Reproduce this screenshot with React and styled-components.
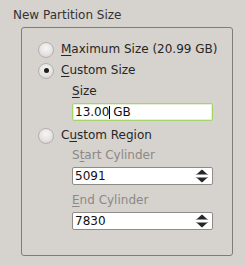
import React from "react";
import styled, { createGlobalStyle } from "styled-components";

const Global = createGlobalStyle`
  html, body { margin: 0; padding: 0; background: #d6d2ce; }
  body { font-family: "DejaVu Sans", sans-serif; font-size: 12px; color: #2e2e2e; }
`;

const Page = styled.div`
  width: 246px;
  height: 265px;
  box-sizing: border-box;
  padding: 8px 0 0 13px;
  display: flex;
  flex-direction: column;
`;

const Title = styled.div`
  line-height: 15px;
  height: 15px;
  color: #333;
`;

const Frame = styled.div`
  margin: 4px 0 0 8px;
  width: 212px;
  height: 229px;
  box-sizing: border-box;
  border: 1px solid #7e7b78;
  border-radius: 3px;
  padding: 11px 0 0 16px;
  display: flex;
  flex-direction: column;
`;

const RadioRow = styled.label`
  display: flex;
  align-items: center;
  height: 21px;
  gap: 7px;
  margin-top: ${(p) => p.$mt || 0}px;
  line-height: 15px;
  color: #262626;
`;

const RadioCircle = styled.span`
  width: 16px;
  height: 16px;
  box-sizing: border-box;
  border-radius: 50%;
  border: 1px solid #b3b0ad;
  background: radial-gradient(circle at 50% 35%, #f6f5f4 0%, #e6e4e2 55%, #cfccc9 100%);
  display: flex;
  align-items: center;
  justify-content: center;
  &::after {
    content: "";
    width: 5px;
    height: 5px;
    border-radius: 50%;
    background: ${(p) => (p.$checked ? "#1e1e1e" : "transparent")};
  }
`;

const Sub = styled.div`
  margin-left: 34px;
  display: flex;
  flex-direction: column;
  margin-top: ${(p) => p.$mt || 0}px;
`;

const FieldLabel = styled.div`
  line-height: 15px;
  height: 15px;
  color: ${(p) => (p.$dim ? "#8c8986" : "#262626")};
  margin-top: ${(p) => p.$mt || 0}px;
`;

const Entry = styled.div`
  margin-top: 4px;
  width: 141px;
  height: 18px;
  box-sizing: border-box;
  background: #fff;
  border: 1px solid ${(p) => (p.$focus ? "#a6d46c" : "#8e8b88")};
  border-radius: 2px;
  ${(p) => (p.$focus ? "box-shadow: inset 0 0 0 1px #e2f2cf;" : "")}
  display: flex;
  align-items: center;
  padding: 0 2px 0 2px;
  color: #111;
  line-height: 15px;
  white-space: pre;
`;

const EntryText = styled.span`
  flex: 1;
  display: flex;
  align-items: center;
`;

const Caret = styled.span`
  display: inline-block;
  width: 0;
  height: 13px;
  border-left: 1px solid #000;
  margin-right: -1px;
`;

const Mn = styled.span`
  text-decoration: underline;
  text-underline-offset: 2px;
  text-decoration-thickness: 1px;
`;

const Spin = () => (
  <svg width="14" height="14" viewBox="0 0 14 14" style={{ marginRight: 1 }}>
    <path d="M0.3 5.6 C3 5 5 2 7 0.6 C9 2 11 5 13.7 5.6 Z" fill="#262626" />
    <path d="M0.3 8.4 C3 9 5 12 7 13.4 C9 12 11 9 13.7 8.4 Z" fill="#262626" />
  </svg>
);

export default function App() {
  return (
    <>
      <Global />
      <Page>
        <Title>New Partition Size</Title>
        <Frame>
          <RadioRow>
            <RadioCircle />
            <span><Mn>M</Mn>aximum Size (20.99 GB)</span>
          </RadioRow>
          <RadioRow>
            <RadioCircle $checked />
            <span><Mn>C</Mn>ustom Size</span>
          </RadioRow>
          <Sub $mt={3}>
            <FieldLabel><Mn>S</Mn>ize</FieldLabel>
            <Entry $focus>
              <EntryText>13.00<Caret /> GB</EntryText>
            </Entry>
          </Sub>
          <RadioRow $mt={4}>
            <RadioCircle />
            <span>C<Mn>u</Mn>stom Region</span>
          </RadioRow>
          <Sub $mt={2}>
            <FieldLabel $dim>S<Mn>t</Mn>art Cylinder</FieldLabel>
            <Entry>
              <EntryText>5091</EntryText>
              <Spin />
            </Entry>
            <FieldLabel $dim $mt={8}><Mn>E</Mn>nd Cylinder</FieldLabel>
            <Entry>
              <EntryText>7830</EntryText>
              <Spin />
            </Entry>
          </Sub>
        </Frame>
      </Page>
    </>
  );
}
